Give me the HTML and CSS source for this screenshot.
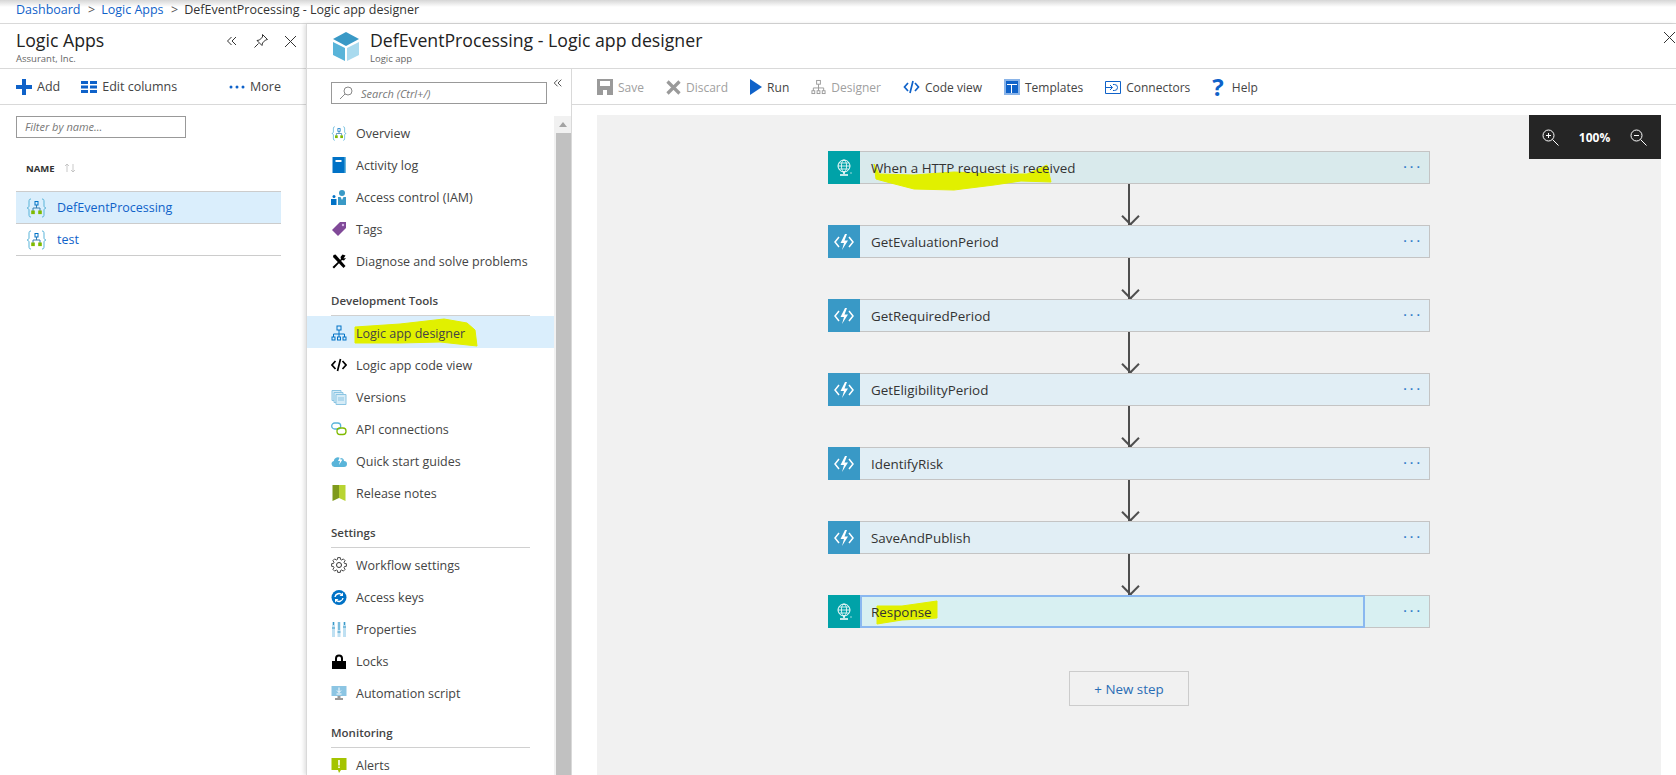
FILE: index.html
```html
<!DOCTYPE html>
<html lang="en">
<head>
    <meta charset="UTF-8">
    <title>DefEventProcessing - Logic app designer</title>
    <link rel="stylesheet" href="styles.css">
</head>
<body>

    <svg class="defs" width="0" height="0">
        <symbol id="i-logic" viewBox="0 0 21 20">
            <path d="M5 1C3 1 3 2 3 4v4c0 1-1 2-2 2 1 0 2 1 2 2v4c0 2 0 3 2 3M16 1c2 0 2 1 2 3v4c0 1 1 2 2 2-1 0-2 1-2 2v4c0 2 0 3-2 3" fill="none" stroke="#59b4d9" stroke-width="1"/>
            <path d="M10.500 7v3M7 13v-3h7v3" fill="none" stroke="#3a7fb0" stroke-width="1"/>
            <rect x="9" y="3.500" width="3" height="3.500" fill="none" stroke="#0072c6"/>
            <rect x="5.200" y="12.500" width="3.600" height="3.600" fill="#7fba00"/>
            <rect x="12.200" y="12.500" width="3.600" height="3.600" fill="#7fba00"/>
        </symbol>
        <symbol id="i-tree" viewBox="0 0 16 16">
            <path d="M8 5v4M2.500 12V9h11v3M8 9v3" fill="none" stroke="currentColor"/>
            <rect x="6" y="1" width="4" height="4" fill="none" stroke="currentColor"/>
            <rect x="1" y="12" width="3" height="3" fill="none" stroke="currentColor"/>
            <rect x="6.500" y="12" width="3" height="3" fill="none" stroke="currentColor"/>
            <rect x="12" y="12" width="3" height="3" fill="none" stroke="currentColor"/>
        </symbol>
        <symbol id="i-code" viewBox="0 0 16 14">
            <path d="M4.500 3L1 7l3.500 4M11.500 3L15 7l-3.500 4M9.500 1L6.500 13" fill="none" stroke="currentColor" stroke-width="1.700"/>
        </symbol>
        <symbol id="i-http" viewBox="0 0 20 20">
            <circle cx="10" cy="8" r="6" fill="none" stroke="#fff"/>
            <ellipse cx="10" cy="8" rx="2.600" ry="6" fill="none" stroke="#fff" stroke-width=".8"/>
            <path d="M4 8h12M5 5h10M5 11h10" stroke="#fff" stroke-width=".8"/>
            <path d="M10 14v2M6 17h8" stroke="#fff" stroke-width="1.500"/>
            <path d="M16 15h2" stroke="#fff" stroke-width="1" opacity=".6"/>
        </symbol>
        <symbol id="i-func" viewBox="0 0 20 20">
            <path d="M5 5L1 10l4 5M15 5l4 5-4 5" fill="none" stroke="#fff" stroke-width="1.500"/>
            <path d="M11 2L6.500 11H10l-2 7 6-9.500h-3.500L13 2z" fill="#fff"/>
        </symbol>
    </svg>

    <div class="crumbs">
        <a href="#">Dashboard</a><span class="sep">&gt;</span><a href="#">Logic Apps</a><span class="sep">&gt;</span><span>DefEventProcessing - Logic app designer</span>
    </div>

    <div class="main">

        <div class="list-pane">
            <div class="pane-head">
                <div>
                    <h1 class="head-title">Logic Apps</h1>
                    <div class="head-sub">Assurant, Inc.</div>
                </div>
                <div class="head-tools">
                    <svg width="12" height="12" viewBox="0 0 12 12"><path d="M5.500 2L1.500 6l4 4M10 2L6 6l4 4" fill="none" stroke="#333"/></svg>
                    <svg width="16" height="16" viewBox="0 0 16 16"><path d="M9.500 1.500l5 5-2 .5-3 3-.5 2.500-5-5 2.500-.5 3-3zM5.500 10.500L1.500 14.500" fill="none" stroke="#333"/></svg>
                    <svg width="13" height="13" viewBox="0 0 13 13"><path d="M1 1l11 11M12 1L1 12" stroke="#333"/></svg>
                </div>
            </div>
            <div class="list-cmds">
                <span class="cmd"><svg width="16" height="16" viewBox="0 0 16 16"><path d="M6 0h4v6h6v4h-6v6H6v-6H0V6h6z" fill="#0f62c9"/></svg>Add</span>
                <span class="cmd"><svg width="16" height="12" viewBox="0 0 16 12"><path d="M0 0h7v3H0zM9 0h7v3H9zM0 4.500h7v3H0zM9 4.500h7v3H9zM0 9h7v3H0zM9 9h7v3H9z" fill="#0f62c9"/></svg>Edit columns</span>
                <span class="cmd cmd-more"><svg width="16" height="4" viewBox="0 0 16 4"><circle cx="2" cy="2" r="1.500" fill="#0f62c9"/><circle cx="8" cy="2" r="1.500" fill="#0f62c9"/><circle cx="14" cy="2" r="1.500" fill="#0f62c9"/></svg>More</span>
            </div>
            <div class="list-body">
                <div class="filter">Filter by name...</div>
                <div class="name-head">NAME <svg width="12" height="10" viewBox="0 0 12 10"><path d="M3 9V1L1 3M3 1l2 2M9 1v8l-2-2M9 9l2-2" fill="none" stroke="#bbb" stroke-width=".8"/></svg></div>
                <div class="res-list">
                    <div class="res-row res-active"><svg width="21" height="20"><use href="#i-logic"/></svg>DefEventProcessing</div>
                    <div class="res-row"><svg width="21" height="20"><use href="#i-logic"/></svg>test</div>
                </div>
            </div>
        </div>

        <div class="blade">
            <div class="pane-head blade-head">
                <svg class="blade-icon" width="26" height="29" viewBox="0 0 26 29">
                    <path d="M13 0l13 7-13 7L0 7z" fill="#3999c6"/>
                    <path d="M0 10l12 6v13L0 23z" fill="#59b4d9"/>
                    <path d="M26 10l-12 6v13l12-6z" fill="#a9daee"/>
                </svg>
                <div class="blade-titles">
                    <h1 class="head-title">DefEventProcessing - Logic app designer</h1>
                    <div class="head-sub">Logic app</div>
                </div>
                <svg class="blade-close" width="13" height="13" viewBox="0 0 13 13"><path d="M1 1l11 11M12 1L1 12" stroke="#333"/></svg>
            </div>

            <div class="blade-body">
                <div class="menu">
                    <div class="menu-top">
                        <div class="search">
                            <svg width="14" height="14" viewBox="0 0 14 14"><circle cx="9" cy="5" r="4" fill="none" stroke="#888"/><path d="M6 8l-5 5" stroke="#888"/></svg>
                            Search (Ctrl+/)
                        </div>
                        <svg class="menu-collapse" width="10" height="10" viewBox="0 0 12 12"><path d="M5.500 2L1.500 6l4 4M10 2L6 6l4 4" fill="none" stroke="#333"/></svg>
                    </div>
                    <div class="menu-scroll">
                        <div class="menu-list">
                            <div class="menu-row"><svg width="16" height="15"><use href="#i-logic"/></svg>Overview</div>
                            <div class="menu-row"><svg width="15" height="16" viewBox="0 0 15 16"><path d="M1 0h13v16H1z" fill="#0072c6"/><path d="M13 0h1v16h-1z" fill="#59b4d9"/><path d="M4 3h6v2H4z" fill="#fff"/></svg>Activity log</div>
                            <div class="menu-row"><svg width="16" height="15" viewBox="0 0 16 15"><circle cx="11" cy="3" r="3" fill="#3999c6"/><path d="M7 7h8v8H7z" fill="#3999c6"/><path d="M9.500 7h3l-1.500 3z" fill="#fff"/><circle cx="3" cy="6.500" r="1.500" fill="#0072c6"/><path d="M0 9h5.500v6H0z" fill="#0072c6"/></svg>Access control (IAM)</div>
                            <div class="menu-row"><svg width="16" height="16" viewBox="0 0 16 16"><path d="M1 9l8-8h6v6l-8 8z" fill="#804998"/><circle cx="12" cy="4" r="1.200" fill="#d8b8e8"/></svg>Tags</div>
                            <div class="menu-row"><svg width="15" height="15" viewBox="0 0 15 15"><path d="M2 1l2-.5 10 11.500-2 2L1.500 3z" fill="#000"/><path d="M14 1.500L11 .5 9 3l.5 2L1 13l1.500 1.500L10.500 6l2 .5L14.500 4 12 4.500z" fill="#000"/></svg>Diagnose and solve problems</div>

                            <div class="menu-section">Development Tools</div>
                            <div class="menu-row menu-active">
                                <svg class="scribble" width="172" height="32" viewBox="0 0 172 32"><path d="M48 11L93 8 137 3 160 7 168 14 170 30 133 26 93 27 48 27z" fill="#e1f000" stroke="#e1f000" stroke-linejoin="round"/></svg>
                                <svg class="tree-blue" width="16" height="16"><use href="#i-tree"/></svg><span class="on-top">Logic app designer</span>
                            </div>
                            <div class="menu-row"><svg class="code-black" width="16" height="14"><use href="#i-code"/></svg>Logic app code view</div>
                            <div class="menu-row"><svg width="15" height="15" viewBox="0 0 15 15"><path d="M.5.5h9v10h-9z" fill="#d6ecf7" stroke="#8cc5e3"/><path d="M2.500 2.500h9v10h-9z" fill="#d6ecf7" stroke="#8cc5e3"/><path d="M4.500 4.500h10v10h-10z" fill="#d6ecf7" stroke="#8cc5e3"/><path d="M6.500 8h6M6.500 10h6" stroke="#8cc5e3"/></svg>Versions</div>
                            <div class="menu-row"><svg width="16" height="14" viewBox="0 0 16 14"><rect x=".7" y="1" width="9" height="6" rx="3" fill="none" stroke="#59b4d9" stroke-width="1.300"/><rect x="6" y="6" width="9" height="6.500" rx="3" fill="none" stroke="#7fba00" stroke-width="1.300"/></svg>API connections</div>
                            <div class="menu-row"><svg width="16" height="13" viewBox="0 0 16 13"><path d="M3.500 12a3 3 0 0 1-.7-5.900A4 4 0 0 1 9 3a3.200 3.200 0 0 1 4 3 3 3 0 0 1 0 6z" fill="#59b4d9"/><path d="M9.500 1L7 6h2L8 10l3.500-5.500H9.500z" fill="#fff"/></svg>Quick start guides</div>
                            <div class="menu-row"><svg width="13" height="16" viewBox="0 0 13 16"><path d="M0 0h6.500v13L0 16z" fill="#7f9a1c"/><path d="M6.500 0H13v16l-6.500-3z" fill="#b8d432"/></svg>Release notes</div>

                            <div class="menu-section">Settings</div>
                            <div class="menu-row"><svg width="16" height="16" viewBox="0 0 16 16"><path d="M6.430 2.520L6.700.61H9.300L9.570 2.520 10.760 3.020 12.310 1.860 14.140 3.690 12.980 5.240 13.480 6.430 15.390 6.700V9.300L13.480 9.570 12.980 10.760 14.140 12.310 12.310 14.140 10.760 12.980 9.570 13.480 9.300 15.390H6.700L6.430 13.480 5.240 12.980 3.690 14.140 1.860 12.310 3.020 10.760 2.520 9.570.61 9.300V6.700L2.520 6.430 3.020 5.240 1.860 3.690 3.690 1.860 5.240 3.020z" fill="none" stroke="#333" stroke-width=".9"/><circle cx="8" cy="8" r="2.500" fill="none" stroke="#333"/></svg>Workflow settings</div>
                            <div class="menu-row"><svg width="15" height="15" viewBox="0 0 15 15"><circle cx="7.500" cy="7.500" r="7.500" fill="#0072c6"/><path d="M3.500 7a4 4 0 0 1 7-2M11.500 8a4 4 0 0 1-7 2" fill="none" stroke="#fff" stroke-width="1.400"/><path d="M11.500 2.500V6H8zM3.500 12.500V9H7z" fill="#fff"/></svg>Access keys</div>
                            <div class="menu-row"><svg width="14" height="15" viewBox="0 0 14 15"><path d="M0 0h3v15H0zM5.500 0h3v15h-3zM11 0h3v15h-3z" fill="#bfe0f2"/><path d="M1.500 0v3M0 6h3M7 0v8M5.500 10h3M12.500 0v3M11 5h3" stroke="#3999c6"/></svg>Properties</div>
                            <div class="menu-row"><svg width="14" height="15" viewBox="0 0 14 15"><path d="M4 7V4.500a3 3 0 0 1 6 0V7" fill="none" stroke="#000" stroke-width="2"/><path d="M0 7h14v8H0z" fill="#000"/></svg>Locks</div>
                            <div class="menu-row"><svg width="15" height="14" viewBox="0 0 15 14"><path d="M0 0h15v10H0z" fill="#8cc5e3"/><path d="M7.500 1.500v5M5.500 4.500l2 2 2-2M5 8h5" fill="none" stroke="#fff"/><path d="M6 10h3v2H6zM3.500 12h8v2h-8z" fill="#999"/></svg>Automation script</div>

                            <div class="menu-section">Monitoring</div>
                            <div class="menu-row"><svg width="15" height="15" viewBox="0 0 15 15"><path d="M0 0h15v12H9.500L7.500 15l-1-3H0z" fill="#a4c400"/><path d="M6.700 2h1.600v5.500H6.700zM6.700 8.500h1.600V10H6.700z" fill="#fff"/></svg>Alerts</div>
                        </div>
                        <div class="scrollbar">
                            <div class="scroll-up"></div>
                            <div class="scroll-thumb"></div>
                        </div>
                    </div>
                </div>

                <div class="designer">
                    <div class="toolbar">
                        <span class="tool tool-off"><svg width="16" height="16" viewBox="0 0 16 16"><path d="M0 0h16v16H0z" fill="#9a9a9a"/><path d="M3 2h10v5H3zM6 11h4v5H6z" fill="#fff"/></svg>Save</span>
                        <span class="tool tool-off"><svg width="15" height="15" viewBox="0 0 15 15"><path d="M1.500 1.500l12 12M13.500 1.500l-12 12" stroke="#9a9a9a" stroke-width="3.200"/></svg>Discard</span>
                        <span class="tool"><svg width="12" height="16" viewBox="0 0 12 16"><path d="M0 0l12 8-12 8z" fill="#0f62c9"/></svg>Run</span>
                        <span class="tool tool-off"><svg class="tree-grey" width="15" height="16"><use href="#i-tree"/></svg>Designer</span>
                        <span class="tool"><svg class="code-blue" width="17" height="14"><use href="#i-code"/></svg>Code view</span>
                        <span class="tool"><svg width="16" height="16" viewBox="0 0 16 16"><path d="M0 0h16v16H0z" fill="#8ab4e8"/><path d="M2 2h12v12H2z" fill="#0f62c9"/><path d="M3 5h10v1H3zM7 6h1v8H7z" fill="#fff"/></svg>Templates</span>
                        <span class="tool"><svg width="16" height="13" viewBox="0 0 16 13"><path d="M.5.5h15v12H.5zM.5 6.500H7M5 4l2.500 2.500L5 9M8 3.500h1.500a3 3 0 0 1 0 6H8" fill="none" stroke="#0f62c9"/></svg>Connectors</span>
                        <span class="tool tool-help"><span class="help-mark">?</span>Help</span>
                    </div>

                    <div class="canvas">
                        <div class="zoom-box">
                            <svg width="17" height="17" viewBox="0 0 17 17"><circle cx="6.500" cy="6.500" r="5.500" fill="none" stroke="#fff"/><path d="M4 6.500h5M6.500 4v5M10.500 10.500l6 6" stroke="#fff"/></svg>
                            <span>100%</span>
                            <svg width="17" height="17" viewBox="0 0 17 17"><circle cx="6.500" cy="6.500" r="5.500" fill="none" stroke="#fff"/><path d="M4 6.500h5M10.500 10.500l6 6" stroke="#fff"/></svg>
                        </div>

                        <div class="step step-http">
                            <svg class="scribble" width="230" height="40" viewBox="0 0 230 40"><path d="M45 12L50 22 85 23 125 20 165 22 198 22 218 13 222 30 192 29 165 33 125 38 85 37 58 30 47 27z" fill="#e1f000" stroke="#e1f000" stroke-linejoin="round"/></svg>
                            <div class="step-icon"><svg width="20" height="20"><use href="#i-http"/></svg></div>
                            <div class="step-name">When a HTTP request is received</div>
                            <div class="step-dots">...</div>
                        </div>
                        <div class="arrow"></div>
                        <div class="step">
                            <div class="step-icon"><svg width="20" height="20"><use href="#i-func"/></svg></div>
                            <div class="step-name">GetEvaluationPeriod</div>
                            <div class="step-dots">...</div>
                        </div>
                        <div class="arrow"></div>
                        <div class="step">
                            <div class="step-icon"><svg width="20" height="20"><use href="#i-func"/></svg></div>
                            <div class="step-name">GetRequiredPeriod</div>
                            <div class="step-dots">...</div>
                        </div>
                        <div class="arrow"></div>
                        <div class="step">
                            <div class="step-icon"><svg width="20" height="20"><use href="#i-func"/></svg></div>
                            <div class="step-name">GetEligibilityPeriod</div>
                            <div class="step-dots">...</div>
                        </div>
                        <div class="arrow"></div>
                        <div class="step">
                            <div class="step-icon"><svg width="20" height="20"><use href="#i-func"/></svg></div>
                            <div class="step-name">IdentifyRisk</div>
                            <div class="step-dots">...</div>
                        </div>
                        <div class="arrow"></div>
                        <div class="step">
                            <div class="step-icon"><svg width="20" height="20"><use href="#i-func"/></svg></div>
                            <div class="step-name">SaveAndPublish</div>
                            <div class="step-dots">...</div>
                        </div>
                        <div class="arrow"></div>
                        <div class="step step-http step-focus">
                            <svg class="scribble" width="120" height="32" viewBox="0 0 120 32"><path d="M48 10L73 10 108 5 108 22 73 24 48 28z" fill="#e1f000" stroke="#e1f000" stroke-linejoin="round"/></svg>
                            <div class="step-icon"><svg width="20" height="20"><use href="#i-http"/></svg></div>
                            <div class="step-name">Response</div>
                            <div class="step-dots">...</div>
                        </div>

                        <div class="new-step">+ New step</div>
                    </div>
                </div>
            </div>
        </div>
    </div>

</body>
</html>
```

FILE: styles.css
```css
* {
    box-sizing: border-box;
}

html, body {
    height: 100%;
}

body {
    margin: 0;
    height: 775px;
    overflow: hidden;
    background: white;
    color: #333;
    font-family: "Open Sans", "Liberation Sans", sans-serif;
    font-size: 12.5px;
    display: flex;
    flex-direction: column;
}

.defs {
    position: absolute;
}

svg {
    flex: none;
}

/* breadcrumb */

.crumbs {
    height: 24px;
    flex: none;
    display: flex;
    align-items: center;
    padding: 0 16px 4px;
    border-bottom: 1px solid #d9d9d9;
    background: linear-gradient(#d6d6d6, #ffffff 7px);
    white-space: nowrap;
}

.crumbs a {
    color: #0f62c9;
    text-decoration: none;
}

.crumbs .sep {
    margin: 0 6px 0 7.5px;
    color: #555;
}

.main {
    flex: 1;
    display: flex;
    min-height: 0;
}

/* left list */

.list-pane {
    width: 306px;
    flex: none;
}

.pane-head {
    height: 45px;
    display: flex;
    justify-content: space-between;
    padding: 5px 9px 0 16px;
    border-bottom: 1px solid #d9d9d9;
}

.head-title {
    margin: 0;
    font-size: 17.7px;
    font-weight: 400;
    line-height: 23px;
    color: #222;
    white-space: nowrap;
}

.head-sub {
    font-size: 9.5px;
    line-height: 13px;
    color: #666;
}

.head-tools {
    display: flex;
    align-items: center;
    gap: 15px;
    height: 24px;
}

.list-cmds {
    height: 36px;
    display: flex;
    align-items: center;
    padding: 0 25px 0 16px;
    border-bottom: 1px solid #d9d9d9;
}

.cmd {
    display: flex;
    align-items: center;
    gap: 5px;
    margin-right: 21px;
    color: #444;
}

.cmd-more {
    margin-left: auto;
    margin-right: 0;
}

.list-body {
    padding: 11px 25px 0 16px;
}

.filter {
    width: 170px;
    height: 22px;
    border: 1px solid #999;
    padding-left: 8px;
    line-height: 20px;
    font-size: 11px;
    font-style: italic;
    color: #777;
}

.name-head {
    height: 53px;
    display: flex;
    align-items: center;
    gap: 9px;
    padding: 7px 0 0 10px;
    font-size: 9.5px;
    font-weight: 700;
    color: #333;
}

.res-list {
    border-top: 1px solid #ccc;
}

.res-row {
    height: 32px;
    display: flex;
    align-items: center;
    gap: 10px;
    padding-left: 10px;
    border-bottom: 1px solid #ccc;
    color: #0f62c9;
}

.res-active {
    background: #daeefc;
}

/* blade */

.blade {
    flex: 1;
    min-width: 0;
    display: flex;
    flex-direction: column;
    border-left: 1px solid #d9d9d9;
    box-shadow: -2px 0 4px rgba(0, 0, 0, 0.12);
}

.blade-head {
    flex: none;
    justify-content: flex-start;
    padding: 8px 0 0 26px;
    position: relative;
}

.blade-icon {
    margin-right: 11px;
}

.blade-titles {
    margin-top: -3px;
}

.blade-close {
    position: absolute;
    right: 0;
    top: 7px;
}

.blade-body {
    flex: 1;
    display: flex;
    min-height: 0;
}

/* resource menu */

.menu {
    width: 264px;
    flex: none;
    display: flex;
    flex-direction: column;
}

.menu-top {
    height: 47px;
    flex: none;
    display: flex;
    padding: 13px 0 0 24px;
}

.search {
    width: 216px;
    height: 22px;
    display: flex;
    align-items: center;
    gap: 8px;
    padding-left: 7px;
    border: 1px solid #999;
    font-size: 11px;
    font-style: italic;
    color: #777;
}

.menu-collapse {
    margin: -4px 0 0 6px;
}

.menu-scroll {
    flex: 1;
    min-height: 0;
    display: flex;
    overflow: hidden;
}

.menu-list {
    width: 247px;
    flex: none;
}

.menu-row {
    height: 32px;
    display: flex;
    align-items: center;
    gap: 9px;
    padding: 2px 0 0 24px;
    position: relative;
    color: #444;
}

.menu-row > svg:not(.scribble) {
    width: 16px;
    position: relative;
}

.menu-active {
    background: #daeefc;
}

.menu-section {
    height: 40px;
    display: flex;
    align-items: flex-end;
    margin: 0 24px;
    padding-bottom: 7px;
    border-bottom: 1px solid #d0d0d0;
    color: #444;
    font-weight: 600;
    font-size: 11.5px;
}

.scribble {
    position: absolute;
    left: 0;
    top: 0;
    overflow: visible;
}

.on-top {
    position: relative;
}

.tree-blue {
    color: #0072c6;
}

.code-black {
    color: #000;
}

.scrollbar {
    width: 17px;
    flex: none;
    background: #f1f1f1;
}

.scroll-up {
    height: 17px;
    position: relative;
}

.scroll-up::before {
    content: "";
    display: block;
    width: 0;
    margin: 0 auto;
    transform: translateY(6px);
    border: 4px solid transparent;
    border-top: 0;
    border-bottom: 5px solid #a3a3a3;
}

.scroll-thumb {
    height: 100%;
    margin-left: 2px;
    background: #c1c1c1;
}

/* designer */

.designer {
    flex: 1;
    min-width: 0;
    display: flex;
    flex-direction: column;
    border-left: 1px solid #d9d9d9;
}

.toolbar {
    height: 36px;
    flex: none;
    display: flex;
    align-items: center;
    gap: 22px;
    padding: 1px 0 0 25px;
    border-bottom: 1px solid #d9d9d9;
    font-size: 12px;
}

.tool {
    display: flex;
    align-items: center;
    gap: 5px;
    color: #444;
}

.tool-off {
    color: #a0a0a0;
}

.tool-help {
    gap: 8px;
}

.tree-grey {
    color: #999;
}

.code-blue {
    color: #0f62c9;
}

.help-mark {
    font-size: 24px;
    font-weight: 700;
    line-height: 18px;
    color: #0f62c9;
}

.canvas {
    flex: 1;
    min-height: 0;
    margin: 10px 15px 0 25px;
    padding-top: 36px;
    background: #f1f1f1;
    position: relative;
    display: flex;
    flex-direction: column;
    align-items: center;
}

.zoom-box {
    position: absolute;
    top: 0;
    right: 0;
    width: 132px;
    height: 44px;
    display: flex;
    align-items: center;
    justify-content: space-between;
    padding: 0 14px 0 13px;
    background: #252525;
    color: white;
    font-size: 12px;
    font-weight: 700;
}

.step {
    width: 602px;
    height: 33px;
    flex: none;
    display: flex;
    position: relative;
    border: 1px solid #c4c4c4;
    background: #e1eef5;
}

.step-http {
    background: #d9eaec;
}

.step-focus {
    background: #d8f0f2;
}

.step-icon {
    width: 32px;
    margin: -1px 0 -1px -1px;
    flex: none;
    display: flex;
    align-items: center;
    justify-content: center;
    background: #3999c6;
    position: relative;
}

.step-http .step-icon {
    background: #00a2a8;
}

.step-name {
    flex: 1;
    display: flex;
    align-items: center;
    padding-left: 11px;
    position: relative;
    font-size: 13.4px;
    color: #333;
}

.step-focus .step-name {
    margin: -1px 0;
    border: 2px solid #8ab8f0;
    padding-left: 9px;
}

.step-dots {
    width: 64px;
    flex: none;
    padding-right: 6px;
    text-align: right;
    line-height: 23px;
    font-size: 13px;
    font-weight: 600;
    letter-spacing: 3px;
    color: #2f7bc8;
}

.arrow {
    width: 15px;
    height: 41px;
    flex: none;
    position: relative;
}

.arrow::before {
    content: "";
    display: block;
    width: 2px;
    height: 41px;
    margin: 0 auto;
    background: #4e4e4e;
}

.arrow::after {
    content: "";
    position: absolute;
    left: 2px;
    bottom: 2px;
    width: 11px;
    height: 11px;
    border-right: 2px solid #4e4e4e;
    border-bottom: 2px solid #4e4e4e;
    transform: rotate(45deg);
}

.new-step {
    width: 120px;
    height: 35px;
    flex: none;
    margin-top: 43px;
    display: flex;
    align-items: center;
    justify-content: center;
    border: 1px solid #ccc;
    color: #2a6db5;
    font-size: 13.4px;
}
```
